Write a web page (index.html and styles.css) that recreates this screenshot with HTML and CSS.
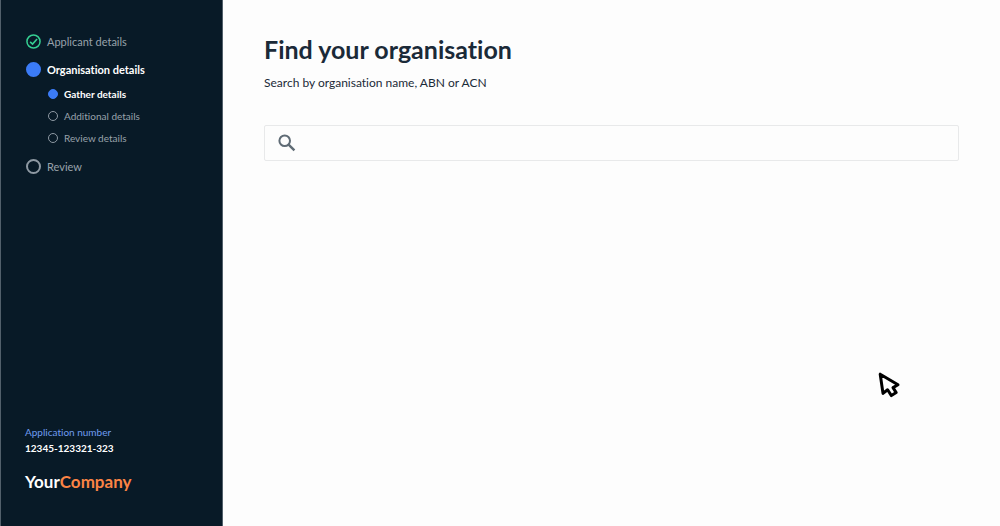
FILE: index.html
```
<!DOCTYPE html>
<html lang="en">
<head>
    <meta charset="UTF-8">
    <meta name="viewport" content="width=device-width, initial-scale=1.0">
    <title>Find your organisation</title>
    <link rel="stylesheet" href="styles.css">
</head>
<body>
    <aside class="sidebar">
        <ol class="steps">
            <li>
                <div class="step">
                    <svg class="icon" viewBox="0 0 16 16">
                        <circle cx="8" cy="8" r="7" fill="none" stroke="#35cf92" stroke-width="1.6"/>
                        <path d="M4.4 8.4 L7 10.8 L11.8 5.4" fill="none" stroke="#35cf92" stroke-width="1.7"/>
                    </svg>
                    <span>Applicant details</span>
                </div>
            </li>
            <li>
                <div class="step current">
                    <span class="dot"></span>
                    <span>Organisation details</span>
                </div>
                <ol class="substeps">
                    <li class="substep current"><span class="dot"></span><span>Gather details</span></li>
                    <li class="substep"><span class="dot"></span><span>Additional details</span></li>
                    <li class="substep"><span class="dot"></span><span>Review details</span></li>
                </ol>
            </li>
            <li>
                <div class="step">
                    <span class="dot"></span>
                    <span>Review</span>
                </div>
            </li>
        </ol>
        <div class="sidebar-footer">
            <p class="number-label">Application number</p>
            <p class="number">12345-123321-323</p>
            <p class="logo">Your<span>Company</span></p>
        </div>
    </aside>
    <main class="content">
        <h1>Find your organisation</h1>
        <label for="search">Search by organisation name, ABN or ACN</label>
        <div class="search-box">
            <svg class="search-icon" viewBox="0 0 18 18">
                <circle cx="6.7" cy="6.7" r="5.3" fill="none" stroke="#5f6b75" stroke-width="2"/>
                <path d="M10.6 10.6 L16.4 16.4" stroke="#5f6b75" stroke-width="2.4"/>
            </svg>
            <input type="text" id="search">
        </div>
    </main>
    <svg class="cursor" viewBox="0 0 24 28">
        <path d="M3.2 3.2 L6 22.4 L10.6 18.8 L14.4 24.6 L19.2 21.6 L16 16.6 L21 13.8 Z" fill="#fff" stroke="#000" stroke-width="3" stroke-linejoin="round"/>
    </svg>
</body>
</html>
```

FILE: styles.css
```
* {
    box-sizing: border-box;
}
body {
    display: flex;
    min-height: 100vh;
    margin: 0;
    font-family: Lato, sans-serif;
    font-variant-ligatures: none;
    background-color: #fdfdfd;
    color: #1b2a38;
}
p {
    margin: 0;
}
.sidebar {
    display: flex;
    flex-direction: column;
    justify-content: space-between;
    flex: 0 0 223px;
    padding: 31px 24px 34px;
    background-color: #081a27;
    border-left: 1px solid #52606b;
    border-right: 1px solid #52606b;
    color: #98a2ab;
}
.steps,
.substeps {
    margin: 0;
    padding: 0;
    list-style: none;
}
.step {
    display: flex;
    align-items: center;
    gap: 6px;
    height: 20px;
    margin: 0 0 8px 1px;
    font-size: 11px;
    white-space: nowrap;
}
.icon,
.dot {
    flex: none;
    width: 15px;
    height: 15px;
}
.dot {
    border: 2px solid #8e99a3;
    border-radius: 50%;
}
.substeps {
    margin: -4px 0 7px 23px;
}
.substep {
    display: flex;
    align-items: center;
    gap: 6px;
    height: 22px;
    font-size: 10px;
}
.substep .dot {
    width: 10px;
    height: 10px;
    border-width: 1px;
}
.current {
    color: #fff;
    font-weight: 700;
}
.current .dot {
    background-color: #3b7bf6;
    border-color: #3b7bf6;
}
.number-label {
    font-size: 10px;
    line-height: 16px;
    color: #6f9cf0;
}
.number {
    font-size: 10px;
    line-height: 16px;
    font-weight: 700;
    color: #fff;
}
.logo {
    margin-top: 16px;
    font-size: 17px;
    line-height: 20px;
    font-weight: 700;
    color: #fff;
}
.logo span {
    color: #fb8445;
}
.content {
    flex: 1;
    padding: 32px 41px;
}
h1 {
    margin: 0 0 8px;
    font-size: 25px;
    line-height: 34px;
}
label {
    display: block;
    font-size: 12px;
    line-height: 18px;
}
.search-box {
    display: flex;
    align-items: center;
    gap: 12px;
    height: 36px;
    margin-top: 33px;
    padding: 0 13px;
    border: 1px solid #e8e9ea;
    border-radius: 2px;
}
.search-icon {
    flex: none;
    width: 18px;
    height: 18px;
}
.search-box input {
    flex: 1;
    height: 100%;
    border: none;
    outline: none;
    background: transparent;
    font-family: inherit;
    font-size: 12px;
}
.cursor {
    position: absolute;
    top: 371px;
    left: 877px;
    width: 24px;
    height: 28px;
    pointer-events: none;
}
```
